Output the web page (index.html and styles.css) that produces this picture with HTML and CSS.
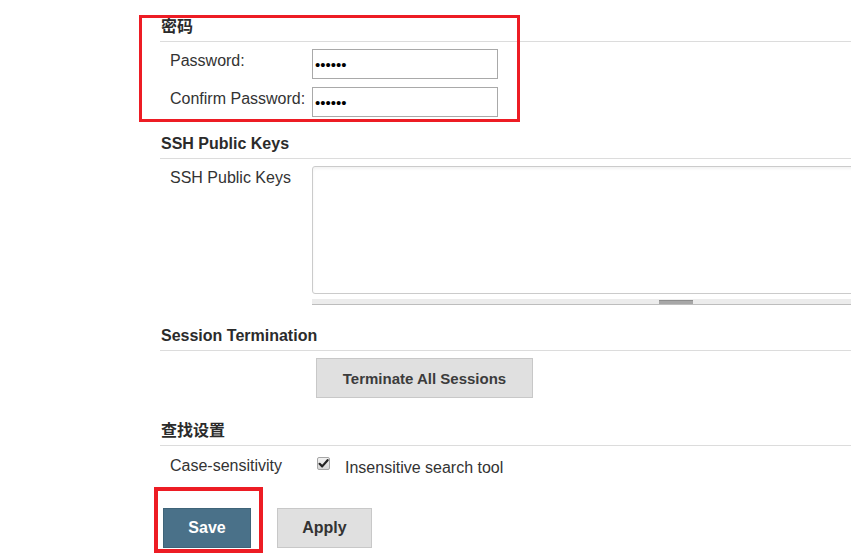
FILE: index.html
```html
<!DOCTYPE html>
<html lang="zh-CN">
<head>
<meta charset="utf-8">
<title>User settings</title>
<link rel="stylesheet" href="styles.css">
</head>
<body>
<div class="page">
  <section class="section">
    <div class="section-head">密码</div>
    <div class="rows">
      <div class="row">
        <label class="label">Password:</label>
        <div class="field"><input class="pw" type="password" value="123456"></div>
      </div>
      <div class="row">
        <label class="label">Confirm Password:</label>
        <div class="field"><input class="pw" type="password" value="123456"></div>
      </div>
    </div>
  </section>

  <section class="section ssh">
    <div class="section-head">SSH Public Keys</div>
    <div class="rows">
      <div class="row">
        <label class="label">SSH Public Keys</label>
        <div class="field">
          <textarea class="keys"></textarea>
          <div class="hscroll"><span class="thumb"></span></div>
        </div>
      </div>
    </div>
  </section>

  <section class="section session">
    <div class="section-head">Session Termination</div>
    <div class="rows">
      <div class="row">
        <div class="label"></div>
        <div class="field"><button class="btn terminate" type="button">Terminate All Sessions</button></div>
      </div>
    </div>
  </section>

  <section class="section search">
    <div class="section-head">查找设置</div>
    <div class="rows case-rows">
      <div class="row">
        <label class="label">Case-sensitivity</label>
        <div class="field check-field">
          <span class="checkbox"><svg width="11" height="11" viewBox="0 0 11 11"><path d="M1.6 5.8 L4.2 8.4 L9.6 2.2" fill="none" stroke="#222" stroke-width="2.2" stroke-linecap="round" stroke-linejoin="round"/></svg></span>
          <span class="check-label">Insensitive search tool</span>
        </div>
      </div>
    </div>
  </section>

  <div class="actions">
    <button class="btn save" type="button">Save</button>
    <button class="btn apply" type="button">Apply</button>
  </div>
</div>
<div class="mark mark-password"></div>
<div class="mark mark-save"></div>
</body>
</html>
```

FILE: styles.css
```css
html, body {
  margin: 0;
  padding: 0;
  background: #fff;
  overflow: hidden;
}
body {
  width: 851px;
  height: 557px;
  position: relative;
  font-family: "Liberation Sans", Arial, "Noto Sans CJK SC", sans-serif;
  color: #333;
  font-size: 16px;
}
.page {
  padding: 15px 0 0 160px;
}
.section-head {
  font-weight: bold;
  font-size: 16px;
  line-height: 24px;
  padding: 0 0 2px 1px;
  border-bottom: 1px solid #dcdcdc;
  color: #2b2b2b;
}
.rows {
  margin-top: 7px;
  display: flex;
  flex-direction: column;
  gap: 8px;
}
.row {
  display: grid;
  grid-template-columns: 152px 1fr;
  align-items: start;
}
.label {
  padding: 2px 0 0 10px;
  line-height: 20px;
  color: #333;
}
.field {
  min-width: 0;
}
.pw {
  box-sizing: border-box;
  width: 186px;
  height: 30px;
  margin: 0;
  padding: 0 2px;
  border: 1px solid #a9a9a9;
  font-family: "Liberation Sans", Arial, sans-serif;
  font-size: 15px;
  color: #000;
  background: #fff;
  outline: none;
}
.ssh {
  margin-top: 15px;
}
.keys {
  display: block;
  box-sizing: border-box;
  width: 580px;
  height: 128px;
  margin: 0;
  border: 1px solid #cbcbcb;
  border-radius: 3px;
  box-shadow: inset 0 2px 3px rgba(0,0,0,0.05);
  resize: none;
  outline: none;
}
.hscroll {
  margin-top: 5px;
  width: 580px;
  height: 5px;
  background: #ececec;
  border-bottom: 1px solid #bdbdbd;
  display: flex;
}
.thumb {
  margin-left: 347px;
  width: 34px;
  height: 4px;
  margin-top: 1px;
  background: #a7a7a7;
  border-top: 1px solid #8d8d8d;
  box-sizing: border-box;
}
.session {
  margin-top: 19px;
}
.btn {
  font-family: "Liberation Sans", Arial, sans-serif;
  font-weight: bold;
  margin: 0;
  cursor: pointer;
}
.terminate {
  margin-left: 4px;
  height: 40px;
  width: 217px;
  padding: 0;
  font-size: 15px;
  color: #3c3c3c;
  background: #e0e0e0;
  border: 1px solid #c8c8c8;
}
.search {
  margin-top: 21px;
}
.case-rows {
  margin-top: 8px;
}
.check-field {
  display: flex;
  align-items: flex-start;
  padding-left: 5px;
}
.checkbox {
  box-sizing: border-box;
  width: 13px;
  height: 13px;
  margin-top: 3px;
  border: 1px solid #a6a6a6;
  border-radius: 2px;
  background: linear-gradient(#f2f2f2, #d6d6d6);
  display: flex;
  align-items: center;
  justify-content: center;
}
.check-label {
  margin-left: 15px;
  padding-top: 4px;
  line-height: 20px;
  color: #333;
}
.actions {
  margin-top: 30px;
  padding-left: 3px;
  display: flex;
  gap: 26px;
}
.save {
  width: 88px;
  height: 40px;
  font-size: 16px;
  color: #fff;
  background: #4a7189;
  border: 1px solid #3f6479;
}
.apply {
  width: 95px;
  height: 40px;
  font-size: 16px;
  color: #333;
  background: #e0e0e0;
  border: 1px solid #c8c8c8;
}
.mark {
  position: absolute;
  box-sizing: border-box;
  border: 3px solid #ed1c24;
  pointer-events: none;
}
.mark-password {
  left: 139px;
  top: 15px;
  width: 381px;
  height: 107px;
}
.mark-save {
  left: 154px;
  top: 487px;
  width: 109px;
  height: 66px;
  border-width: 4px;
}
```
